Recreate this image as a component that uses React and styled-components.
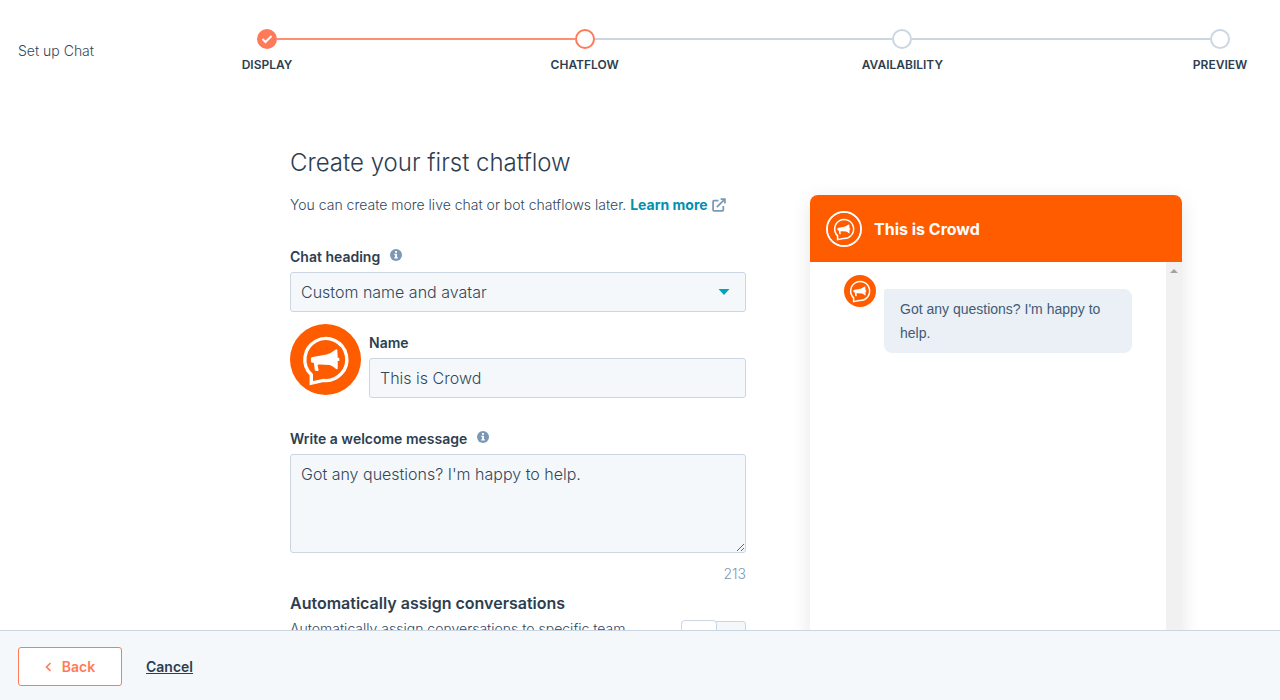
import React, { useState } from "react";
import styled, { createGlobalStyle, css } from "styled-components";

const GlobalStyle = createGlobalStyle`
  * {
    box-sizing: border-box;
  }

  body {
    margin: 0;
    background-color: #fff;
    color: #33475b;
    font-family: Inter, "Liberation Sans", sans-serif;
    font-size: 14px;
    font-weight: 300;
    line-height: 24px;
  }

  h1, h2, h3, p, ol {
    margin: 0;
    padding: 0;
  }

  button, input, select, textarea {
    font: inherit;
    color: inherit;
  }
`;

const StyledApp = styled.div`
  display: flex;
  flex-direction: column;
  height: 100vh;
`;

const StyledHeader = styled.header`
  display: grid;
  grid-template-columns: 239px 1fr;
  align-items: center;
  flex-shrink: 0;
  height: 101px;
  padding: 0 50px 0 18px;
`;

const StyledSteps = styled.ol`
  display: flex;
  list-style: none;
`;

const StyledStep = styled.li`
  flex: 1;

  &:last-child {
    flex: 0 0 20px;
  }
`;

const StyledTrack = styled.div`
  display: flex;
  align-items: center;
`;

const StyledDot = styled.span`
  display: flex;
  align-items: center;
  justify-content: center;
  flex-shrink: 0;
  width: 20px;
  height: 20px;
  border: 2px solid ${(props) => (props.$reached ? "#ff7a59" : "#cbd6e2")};
  border-radius: 50%;
  ${(props) =>
    props.$done &&
    css`
      background-color: #ff7a59;
    `}
`;

const StyledLine = styled.span`
  flex: 1;
  height: 2px;
  background-color: ${(props) => (props.$done ? "#ff8f73" : "#cbd6e2")};
`;

const StyledStepLabel = styled.div`
  display: flex;
  justify-content: center;
  width: 20px;
  margin-top: 8px;
  color: #2d3e50;
  font-size: 12px;
  font-weight: 600;
  line-height: 16px;
  text-transform: uppercase;
`;

const StyledMain = styled.main`
  display: grid;
  grid-template-columns: 456fr 372fr;
  gap: 64px;
  flex: 1;
  min-height: 0;
  padding: 0 98px 0 290px;
  overflow: hidden;
`;

const StyledForm = styled.form`
  padding-top: 46px;
`;

const StyledTitle = styled.h1`
  color: #2d3e50;
  font-size: 24px;
  font-weight: 300;
  line-height: 32px;
`;

const StyledIntro = styled.p`
  margin: 14px 0 28px;
  white-space: nowrap;
`;

const StyledLink = styled.a`
  color: #0091ae;
  font-weight: 700;
  text-decoration: none;

  svg {
    margin-left: 4px;
    vertical-align: -2px;
  }
`;

const StyledField = styled.div`
  flex: 1;
`;

const StyledLabel = styled.label`
  display: flex;
  gap: 10px;
  margin-bottom: 3px;
  color: #2d3e50;
  font-weight: 600;

  svg {
    margin-top: 4px;
  }
`;

const control = css`
  display: block;
  width: 100%;
  padding: 7px 10px;
  border: 1px solid #cbd6e2;
  border-radius: 3px;
  background-color: #f5f8fa;
  font-size: 16px;
  outline: none;
`;

const StyledSelectBox = styled.div`
  position: relative;

  svg {
    position: absolute;
    top: 17px;
    right: 16px;
    pointer-events: none;
  }
`;

const StyledSelect = styled.select`
  ${control}
  height: 40px;
  padding: 0 10px;
  appearance: none;
`;

const StyledInput = styled.input`
  ${control}
  height: 40px;
`;

const StyledTextarea = styled.textarea`
  ${control}
  height: 99px;
  resize: vertical;
`;

const StyledNameRow = styled.div`
  display: flex;
  gap: 8px;
  margin: 12px 0 29px;

  ${StyledField} {
    margin-top: 7px;
  }
`;

const StyledCount = styled.p`
  margin: 9px 0 5px;
  color: #7c98b6;
  text-align: right;
`;

const StyledAssign = styled.div`
  display: flex;
  align-items: flex-start;
  justify-content: space-between;
`;

const StyledAssignText = styled.div`
  max-width: 360px;

  h3 {
    margin-bottom: 2px;
    color: #2d3e50;
    font-size: 16px;
    font-weight: 600;
    white-space: nowrap;
  }
`;

const StyledToggle = styled.input`
  display: flex;
  flex-shrink: 0;
  width: 65px;
  height: 38px;
  margin: 30px 0 0;
  border: 1px solid #cbd6e2;
  border-radius: 3px;
  background-color: #f5f8fa;
  appearance: none;

  &::before {
    content: "";
    width: 34px;
    height: 38px;
    margin: -2px 0 0 -1px;
    border: 1px solid #cbd6e2;
    border-radius: 4px;
    background-color: #fff;
  }

  &:checked {
    justify-content: flex-end;
    background-color: #00a4bd;
  }
`;

const StyledPreview = styled.aside`
  display: flex;
  flex-direction: column;
  margin-top: 94px;
  border-radius: 8px 8px 0 0;
  box-shadow: 0 5px 20px rgba(0, 0, 0, 0.1);
`;

const StyledPreviewHeader = styled.div`
  display: flex;
  align-items: center;
  gap: 12px;
  height: 67px;
  padding: 0 16px;
  border-radius: 8px 8px 0 0;
  background-color: #ff5c00;
  color: #fff;

  h2 {
    font-size: 16px;
    font-weight: 700;
  }
`;

const StyledRing = styled.span`
  display: flex;
  border: 2px solid #fff;
  border-radius: 50%;
`;

const StyledPreviewBody = styled.div`
  display: flex;
  flex: 1;
`;

const StyledMessages = styled.div`
  display: flex;
  align-items: flex-start;
  flex: 1;
  gap: 8px;
  padding: 13px 34px;
`;

const StyledBubble = styled.p`
  flex: 1;
  margin-top: 14px;
  padding: 8px 16px;
  border-radius: 2px 8px 8px 8px;
  background-color: #eaf0f6;
  color: #425b76;
  font-family: "Liberation Sans", Arial, sans-serif;
  font-weight: 400;
`;

const StyledScrollbar = styled.div`
  display: flex;
  justify-content: center;
  width: 16px;
  padding-top: 7px;
  background-color: #f1f1f1;
`;

const StyledFooter = styled.footer`
  display: flex;
  align-items: center;
  flex-shrink: 0;
  gap: 24px;
  height: 70px;
  padding: 2px 18px 0;
  border-top: 1px solid #cbd6e2;
  background-color: #f5f8fa;
`;

const StyledBackButton = styled.button`
  display: flex;
  align-items: center;
  justify-content: center;
  gap: 10px;
  width: 104px;
  height: 39px;
  border: 1px solid #ff7a59;
  border-radius: 3px;
  background-color: #fff;
  color: #ff7a59;
  font-weight: 600;
`;

const StyledCancel = styled.a`
  color: #2d3e50;
  font-weight: 600;
  text-decoration: underline;
`;

const steps = ["Display", "Chatflow", "Availability", "Preview"];
const currentStep = 1;

function Avatar({ size }) {
  return (
    <svg width={size} height={size} viewBox="0 0 72 72" aria-hidden="true">
      <circle cx="36" cy="36" r="36" fill="#ff5c00" />
      <path
        d="M21.6 51.4A21.3 21.3 0 1 1 34 57.2L21.6 60Z"
        fill="none"
        stroke="#fff"
        strokeWidth="3.4"
      />
      <path
        d="M22 33.8L24.5 33.3L37 31Q42 29.5 46.4 25.9Q47.9 25.2 48 26.5L48.4 34.3L50 34.6V37.6H48.4V45Q48.2 46.3 46.7 45.7Q43.5 42.2 40.3 41.5L30 41Q27.8 40.8 28 42L29 46.7Q29 48 27.5 47.7L25.2 47.2L24.2 39.5L22 39Q21.2 38.8 21.2 37.5V35Q21.2 34 22 33.8Z"
        fill="#fff"
      />
    </svg>
  );
}

function InfoIcon() {
  return (
    <svg width="12" height="12" viewBox="0 0 12 12" aria-hidden="true">
      <circle cx="6" cy="6" r="6" fill="#7c98b6" />
      <path
        d="M5 2h2v1.7H5zM4.3 4.8H7v3.5h.8v1.3H4.3V8.3h.8V6.1h-.8z"
        fill="#fff"
      />
    </svg>
  );
}

function ExternalIcon() {
  return (
    <svg
      width="14"
      height="14"
      viewBox="0 0 13 13"
      fill="none"
      stroke="#7c98b6"
      strokeWidth="1.6"
      aria-hidden="true"
    >
      <path d="M6 2.5H1.8Q1 2.5 1 3.3V11.2Q1 12 1.8 12H9.7Q10.5 12 10.5 11.2V7.5" />
      <path d="M4.5 8.5L11.5 1.5M8 1H12V5" />
    </svg>
  );
}

export default function App() {
  const [name, setName] = useState("This is Crowd");
  const [message, setMessage] = useState(
    "Got any questions? I'm happy to help."
  );

  return (
    <StyledApp>
      <GlobalStyle />
      <StyledHeader>
        <span>Set up Chat</span>
        <StyledSteps>
          {steps.map((step, i) => (
            <StyledStep key={step}>
              <StyledTrack>
                <StyledDot $done={i < currentStep} $reached={i <= currentStep}>
                  {i < currentStep && (
                    <svg width="12" height="10" viewBox="0 0 12 10">
                      <path
                        d="M1.5 5L4.5 8L10.5 2"
                        fill="none"
                        stroke="#fff"
                        strokeWidth="2"
                      />
                    </svg>
                  )}
                </StyledDot>
                {i < steps.length - 1 && <StyledLine $done={i < currentStep} />}
              </StyledTrack>
              <StyledStepLabel>{step}</StyledStepLabel>
            </StyledStep>
          ))}
        </StyledSteps>
      </StyledHeader>

      <StyledMain>
        <StyledForm>
          <StyledTitle>Create your first chatflow</StyledTitle>
          <StyledIntro>
            You can create more live chat or bot chatflows later.{" "}
            <StyledLink href="#learn-more">
              Learn more
              <ExternalIcon />
            </StyledLink>
          </StyledIntro>

          <StyledLabel htmlFor="heading">
            Chat heading <InfoIcon />
          </StyledLabel>
          <StyledSelectBox>
            <StyledSelect id="heading">
              <option>Custom name and avatar</option>
            </StyledSelect>
            <svg width="12" height="6" viewBox="0 0 12 6">
              <path d="M0.5 0H11.5L6 6Z" fill="#00a4bd" />
            </svg>
          </StyledSelectBox>

          <StyledNameRow>
            <Avatar size={71} />
            <StyledField>
              <StyledLabel htmlFor="name">Name</StyledLabel>
              <StyledInput
                id="name"
                value={name}
                onChange={(e) => setName(e.target.value)}
              />
            </StyledField>
          </StyledNameRow>

          <StyledLabel htmlFor="message">
            Write a welcome message <InfoIcon />
          </StyledLabel>
          <StyledTextarea
            id="message"
            value={message}
            onChange={(e) => setMessage(e.target.value)}
          />
          <StyledCount>{250 - message.length}</StyledCount>

          <StyledAssign>
            <StyledAssignText>
              <h3>
                <label htmlFor="assign">Automatically assign conversations</label>
              </h3>
              <p>Automatically assign conversations to specific team</p>
            </StyledAssignText>
            <StyledToggle type="checkbox" id="assign" />
          </StyledAssign>
        </StyledForm>

        <StyledPreview>
          <StyledPreviewHeader>
            <StyledRing>
              <Avatar size={32} />
            </StyledRing>
            <h2>{name}</h2>
          </StyledPreviewHeader>
          <StyledPreviewBody>
            <StyledMessages>
              <Avatar size={32} />
              <StyledBubble>{message}</StyledBubble>
            </StyledMessages>
            <StyledScrollbar>
              <svg width="8" height="4" viewBox="0 0 8 4">
                <path d="M0 4L4 0L8 4Z" fill="#a3a3a3" />
              </svg>
            </StyledScrollbar>
          </StyledPreviewBody>
        </StyledPreview>
      </StyledMain>

      <StyledFooter>
        <StyledBackButton type="button">
          <svg width="7" height="10" viewBox="0 0 7 10">
            <path
              d="M5.5 1L1.5 5L5.5 9"
              fill="none"
              stroke="currentColor"
              strokeWidth="1.6"
            />
          </svg>
          Back
        </StyledBackButton>
        <StyledCancel href="#cancel">Cancel</StyledCancel>
      </StyledFooter>
    </StyledApp>
  );
}
